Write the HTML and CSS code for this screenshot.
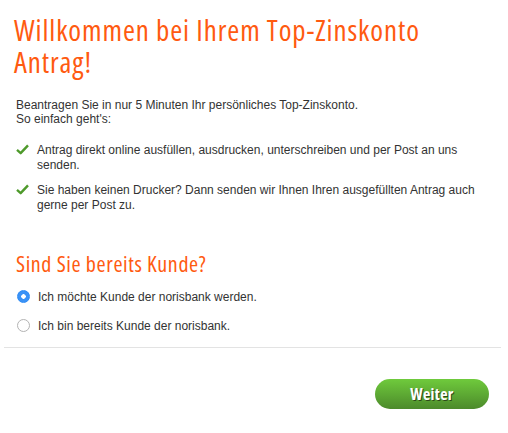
FILE: index.html
```html
<!DOCTYPE html>
<html lang="de">
<head>
<meta charset="utf-8">
<link rel="stylesheet" href="styles.css">
</head>
<body>
<div class="page">
  <h1 class="title">Willkommen bei Ihrem Top-Zinskonto Antrag!</h1>
  <p class="intro">Beantragen Sie in nur 5 Minuten Ihr persönliches Top-Zinskonto.<br>So einfach geht's:</p>
  <ul class="checks">
    <li><svg class="check" viewBox="0 0 14 12" width="13" height="11"><path d="M1 6.5 L5 10 L13 1.5" fill="none" stroke="#4e9a2b" stroke-width="2.6" stroke-linejoin="round"/></svg><span>Antrag direkt online ausfüllen, ausdrucken, unterschreiben und per Post an uns senden.</span></li>
    <li><svg class="check" viewBox="0 0 14 12" width="13" height="11"><path d="M1 6.5 L5 10 L13 1.5" fill="none" stroke="#4e9a2b" stroke-width="2.6" stroke-linejoin="round"/></svg><span>Sie haben keinen Drucker? Dann senden wir Ihnen Ihren ausgefüllten Antrag auch gerne per Post zu.</span></li>
  </ul>
  <h2 class="subtitle">Sind Sie bereits Kunde?</h2>
  <div class="radios">
    <label class="radio"><span class="dot on"></span>Ich möchte Kunde der norisbank werden.</label>
    <label class="radio"><span class="dot"></span>Ich bin bereits Kunde der norisbank.</label>
  </div>
  <hr class="sep">
  <div class="actions"><button class="btn">Weiter</button></div>
</div>
</body>
</html>
```
FILE: styles.css
```css
html, body { margin: 0; padding: 0; background: #fff; }
body { font-family: "Liberation Sans", Arial, sans-serif; color: #333; }
.page { padding: 14px 7px 0 4px; }
.title {
  margin: 0 0 0 10px;
  font-family: "Open Sans", sans-serif;
  font-stretch: condensed;
  font-weight: normal;
  font-size: 29px;
  letter-spacing: 0.9px;
  line-height: 32px;
  color: #ff5a10;
  width: 425px;
}
.intro { margin: 20px 0 0 12px; font-size: 12px; line-height: 14px; }
.checks { list-style: none; margin: 17px 0 0 12px; padding: 0; font-size: 12px; line-height: 15px; }
.checks li { display: flex; align-items: flex-start; margin-bottom: 10px; }
.check { flex: none; margin: 1px 8px 0 0; }
.checks span { width: 440px; }
.subtitle {
  margin: 38px 0 0 12px;
  font-family: "Open Sans", sans-serif;
  font-stretch: condensed;
  font-weight: normal;
  font-size: 22px;
  letter-spacing: 0.6px;
  line-height: 24px;
  color: #ff5a10;
}
.radios { margin: 14px 0 0 13px; font-size: 12px; }
.radio { display: flex; align-items: center; height: 15px; margin-bottom: 14px; }
.dot {
  width: 11px; height: 11px; border-radius: 50%;
  border: 1px solid #b3b3b3; background: #fff; margin-right: 8px; flex: none;
}
.dot.on { border-color: #2d8bf5; background: radial-gradient(circle, #fff 0 2px, #3a92f6 2.5px); }
.sep { border: 0; border-top: 1px solid #e3e3e3; margin: 4px 0 0 0; }
.actions { display: flex; justify-content: flex-end; padding: 31px 12px 0 0; }
.btn {
  width: 114px; height: 30px; border: 0; border-radius: 15px;
  background: linear-gradient(#6fca3c, #4c8a2b);
  color: #fff; font-family: "Open Sans", sans-serif;
  font-stretch: condensed;
  font-weight: bold; font-size: 16px;
  letter-spacing: 0.3px;
  text-shadow: 1px 1px 0 #2d4a1a;
}
```
